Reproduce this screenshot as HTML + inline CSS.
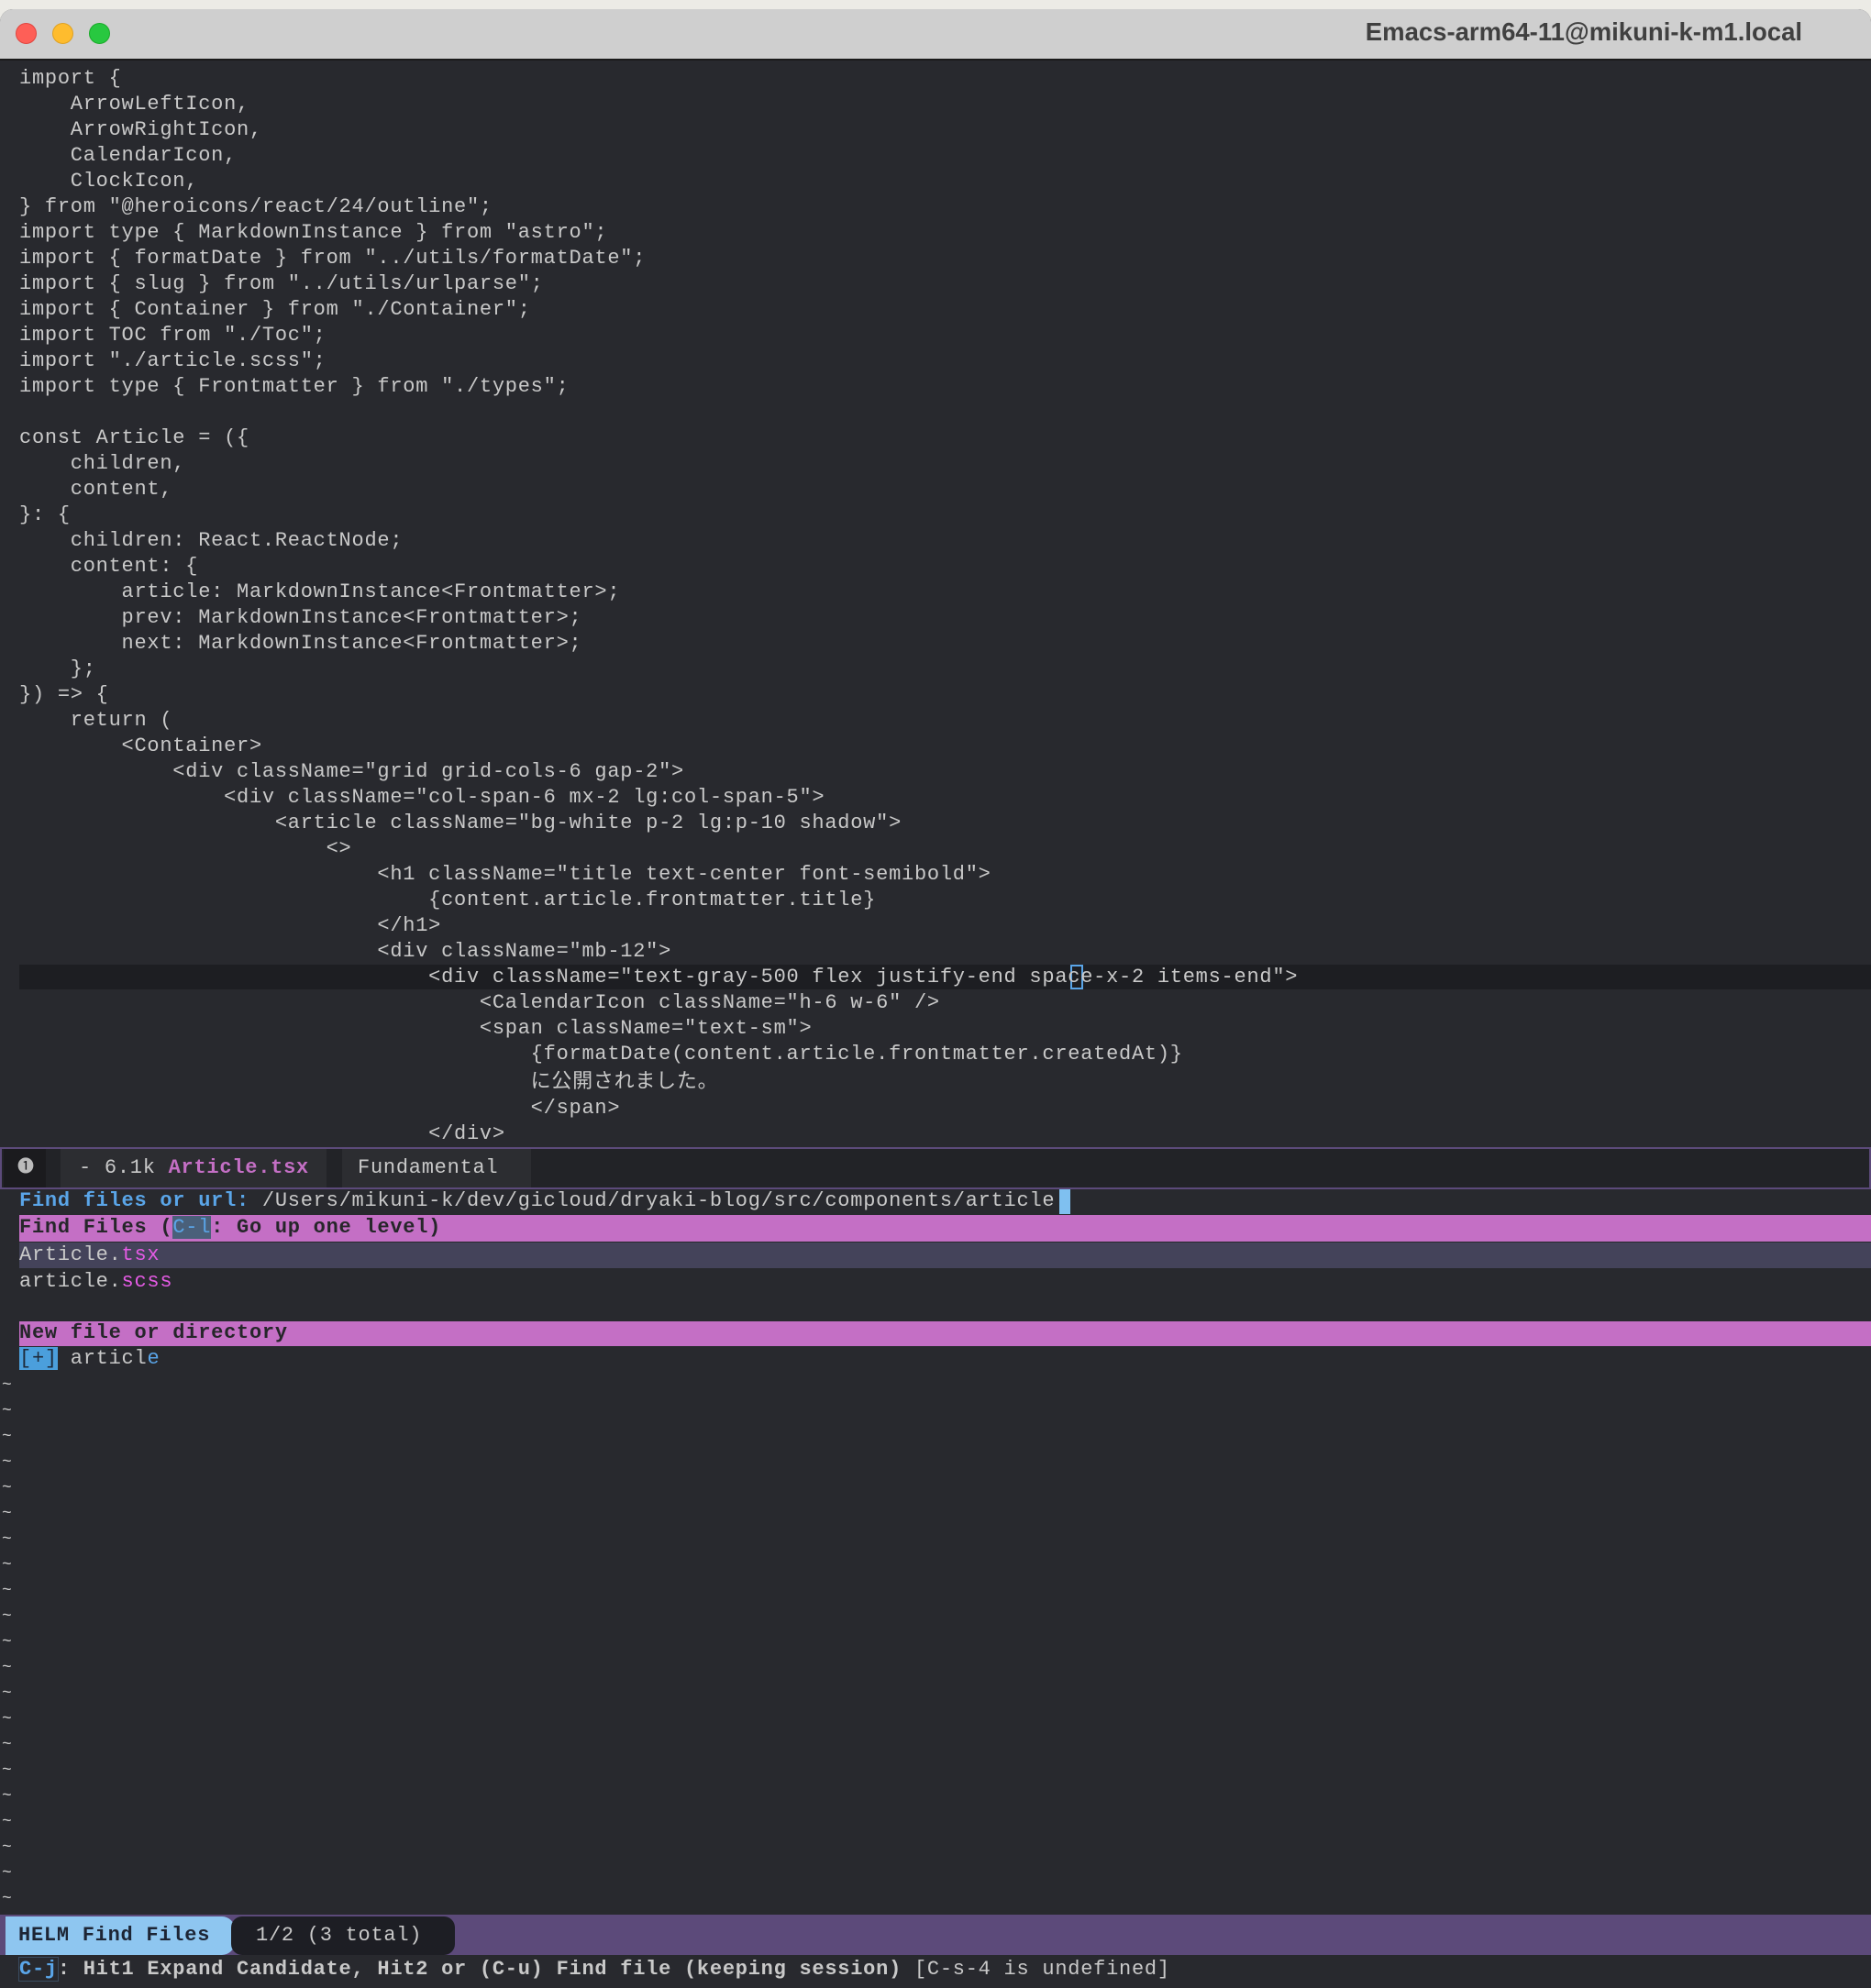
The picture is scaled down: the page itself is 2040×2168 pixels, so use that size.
<!DOCTYPE html>
<html><head><meta charset="utf-8">
<style>
*{margin:0;padding:0;box-sizing:border-box}
html,body{width:2040px;height:2168px;overflow:hidden;background:#ecebe6}
.win{position:absolute;left:0;top:10px;width:2040px;height:2158px;background:#28292e;border-radius:14px 14px 0 0;overflow:hidden}
.title{position:absolute;left:0;top:0;width:2040px;height:56px;background:#cfcfcf;border-bottom:2px solid #1a1a1a}
.dot{position:absolute;top:15px;width:23px;height:23px;border-radius:50%}
.ttext{position:absolute;right:75px;top:9px;font:bold 27.5px "Liberation Sans",sans-serif;color:#404040}
.m{font-family:"Liberation Mono","Noto Sans CJK JP",monospace;font-size:22px;letter-spacing:0.74px;color:#c9c9c9;white-space:pre;line-height:28px}
.abs{position:absolute}
.hl{position:absolute;left:21px;right:0;top:1042px;height:27px;background:#1d1e22}
pre.code{position:absolute;left:21px;top:62px}
.bar{position:absolute;left:21px;right:0;height:28px}
.pk{background:#c46fc5}
</style></head><body>
<div class="win">
<div class="title">
<div class="dot" style="left:17px;background:#fe5f57;border:1px solid #e0443e"></div>
<div class="dot" style="left:57px;background:#febc2e;border:1px solid #dea123"></div>
<div class="dot" style="left:97px;background:#28c840;border:1px solid #1aab29"></div>
<div class="ttext">Emacs-arm64-11@mikuni-k-m1.local</div>
</div>
<div class="hl"></div>
<div class="abs" style="left:1167px;top:1042px;width:14px;height:27px;border:2px solid #5aa5e8"></div>
<pre class="code m">import {
    ArrowLeftIcon,
    ArrowRightIcon,
    CalendarIcon,
    ClockIcon,
} from "@heroicons/react/24/outline";
import type { MarkdownInstance } from "astro";
import { formatDate } from "../utils/formatDate";
import { slug } from "../utils/urlparse";
import { Container } from "./Container";
import TOC from "./Toc";
import "./article.scss";
import type { Frontmatter } from "./types";

const Article = ({
    children,
    content,
}: {
    children: React.ReactNode;
    content: {
        article: MarkdownInstance&lt;Frontmatter&gt;;
        prev: MarkdownInstance&lt;Frontmatter&gt;;
        next: MarkdownInstance&lt;Frontmatter&gt;;
    };
}) =&gt; {
    return (
        &lt;Container&gt;
            &lt;div className="grid grid-cols-6 gap-2"&gt;
                &lt;div className="col-span-6 mx-2 lg:col-span-5"&gt;
                    &lt;article className="bg-white p-2 lg:p-10 shadow"&gt;
                        &lt;&gt;
                            &lt;h1 className="title text-center font-semibold"&gt;
                                {content.article.frontmatter.title}
                            &lt;/h1&gt;
                            &lt;div className="mb-12"&gt;
                                &lt;div className="text-gray-500 flex justify-end space-x-2 items-end"&gt;
                                    &lt;CalendarIcon className="h-6 w-6" /&gt;
                                    &lt;span className="text-sm"&gt;
                                        {formatDate(content.article.frontmatter.createdAt)}
<span style="display:inline-block;height:30px;line-height:33px">                                        に公開されました。</span>
                                        &lt;/span&gt;
                                &lt;/div&gt;</pre>
<!-- mode line -->
<div class="abs" style="left:0;right:0;top:1241px;height:46px;border:2px solid #5c4a7a;background:#222327"></div>
<div class="abs" style="left:4px;top:1243px;width:46px;height:42px;background:#1b1b1e"></div>
<div class="abs" style="left:66px;top:1243px;width:290px;height:42px;background:#2c2d31"></div>
<div class="abs" style="left:373px;top:1243px;width:206px;height:42px;background:#2c2d31"></div>
<div class="abs m" style="left:19px;top:1250px;font-size:18px;color:#bbb">❶</div>
<div class="abs m" style="left:86px;top:1250px">- 6.1k <b style="color:#c46fc5">Article.tsx</b></div>
<div class="abs m" style="left:390px;top:1250px">Fundamental</div>
<!-- minibuffer -->
<div class="abs m" style="left:21px;top:1286px"><b style="color:#5aa5e8">Find files or url:</b> /Users/mikuni-k/dev/gicloud/dryaki-blog/src/components/article</div>
<div class="abs" style="left:1155px;top:1287px;width:12px;height:27px;background:#7fc0f0"></div>
<div class="bar pk" style="top:1315px;height:29px"></div>
<div class="abs m" style="left:21px;top:1315px;color:#26262a;font-weight:bold">Find Files (<span style="background:#4a607a;color:#5aa5e8;font-weight:normal">C-l</span>: Go up one level)</div>
<div class="bar" style="top:1345px;background:#44435a"></div>
<div class="abs m" style="left:21px;top:1345px">Article.<span style="color:#e45be4">tsx</span></div>
<div class="abs m" style="left:21px;top:1374px">article.<span style="color:#e45be4">scss</span></div>
<div class="bar pk" style="top:1431px;height:27px"></div>
<div class="abs m" style="left:21px;top:1430px;color:#26262a;font-weight:bold">New file or directory</div>
<div class="abs m" style="left:21px;top:1458px"><span style="background:#4b9fdc;color:#1d2a3a">[+]</span> articl<span style="color:#5aa5e8">e</span></div>
<pre class="abs m" style="left:2px;top:1487px;font-size:18px;letter-spacing:0">~
~
~
~
~
~
~
~
~
~
~
~
~
~
~
~
~
~
~
~
~</pre>
<!-- helm mode line -->
<div class="abs" style="left:0;right:0;top:2078px;height:44px;background:#5c4a7a"></div>
<div class="abs" style="left:6px;top:2080px;width:250px;height:42px;background:#8ec6f0;border-radius:0 14px 14px 0"></div>
<div class="abs" style="left:252px;top:2080px;width:244px;height:42px;background:#1d1e24;border-radius:12px"></div>
<div class="abs m" style="left:20px;top:2087px;color:#1d2535;font-weight:bold">HELM Find Files</div>
<div class="abs m" style="left:279px;top:2087px">1/2 (3 total)</div>
<div class="abs m" style="left:21px;top:2124px;font-weight:bold;color:#c9c9c9"><span style="color:#5aa5e8;outline:1px solid #3a4c60">C-j</span>: Hit1 Expand Candidate, Hit2 or (C-u) Find file (keeping session) <span style="font-weight:normal">[C-s-4 is undefined]</span></div>
</div>
</body></html>
